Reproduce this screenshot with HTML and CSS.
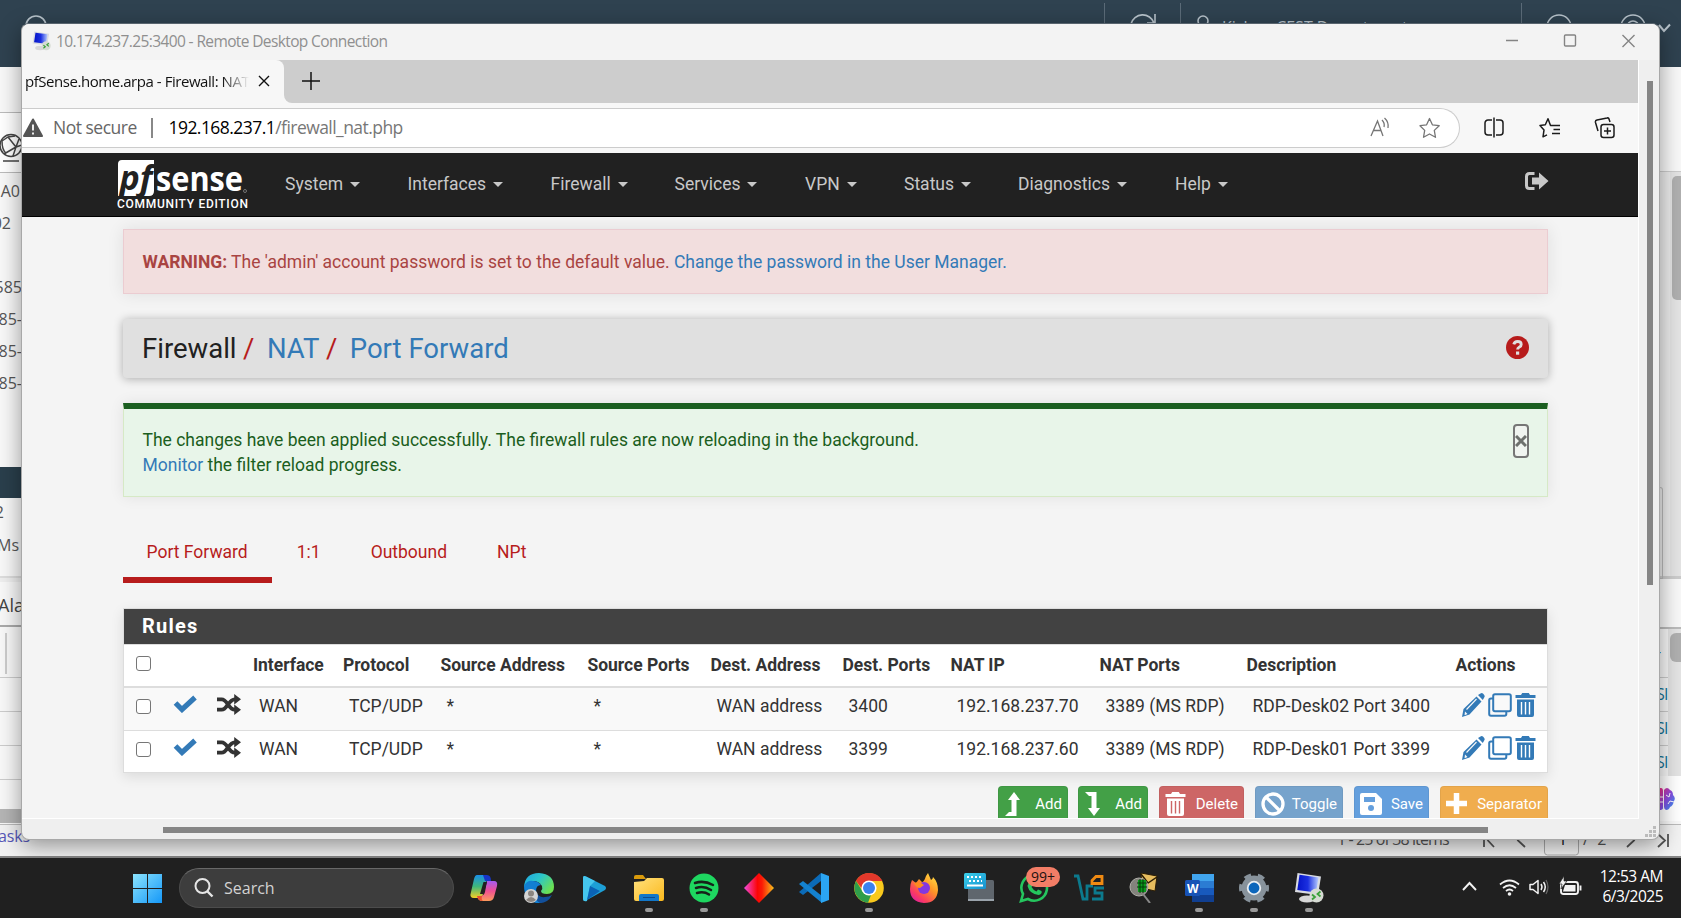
FILE: index.html
```html
<!DOCTYPE html>
<html lang="en">
<head>
<meta charset="utf-8">
<title>Remote Desktop</title>
<link rel="stylesheet" href="styles.css">
</head>
<body>
<svg class="defs" width="0" height="0">
  <defs>
    <symbol id="i-check" viewBox="0 0 24 18"><path d="M2.500 8 9 14.500 22 2.500" fill="none" stroke="#337ab7" stroke-width="5.200"/></symbol>
    <symbol id="i-shuffle" viewBox="0 0 23 20"><path d="M0 5h4.500C10 5 11 15 17 15h1M0 15h4.500C10 15 11 5 17 5h1" fill="none" stroke="#333" stroke-width="3.600"/><path d="M16.500 0 23 5l-6.500 5zM16.500 10 23 15l-6.500 5z" fill="#333"/></symbol>
    <symbol id="i-pencil" viewBox="0 0 23 24"><path d="M14.500 3.500 19.500 8.600 7.500 21.500 0 24l1.500-8zM16 2l2.500-1.600q1.500-.800 2.700.400l1 1.200q1 1.300 0 2.500L20.800 7z" fill="#337ab7"/><path d="M4.500 16.500 14.500 6" stroke="#f9f9f9" stroke-width="1.100"/><path d="M3 18.500l2.500 2.400-3 1.300z" fill="#f9f9f9"/></symbol>
    <symbol id="i-clone" viewBox="0 0 24 24"><path d="M7 1.200h14a1.800 1.800 0 0 1 1.800 1.800v13.500a1.800 1.800 0 0 1-1.800 1.800H7a1.800 1.800 0 0 1-1.800-1.800V3A1.800 1.800 0 0 1 7 1.200zM5 5.500H3A1.800 1.800 0 0 0 1.200 7.300V21A1.800 1.800 0 0 0 3 22.800h13.500a1.800 1.800 0 0 0 1.800-1.800v-2" fill="none" stroke="#337ab7" stroke-width="2"/></symbol>
    <symbol id="i-trash" viewBox="0 0 21 24"><path d="M.500 2H6l1.200-2h6.600L15 2h5.500v3H.500zM2 6.500h17v15.500a2 2 0 0 1-2 2H4a2 2 0 0 1-2-2z" fill="currentColor"/><path d="M6.500 9v12.500M10.500 9v12.500M14.500 9v12.500" class="bars" stroke-width="1.400"/></symbol>
    <linearGradient id="g-win" x1="0" y1="0" x2="1" y2="1"><stop offset="0" stop-color="#8be3fd"/><stop offset="1" stop-color="#1598f8"/></linearGradient>
    <linearGradient id="g-dia"><stop offset="0" stop-color="#f04be0"/><stop offset=".45" stop-color="#fb0505"/><stop offset=".6" stop-color="#fb1a05"/><stop offset="1" stop-color="#f7c11c"/></linearGradient>
    <linearGradient id="g-cop" x1="0" y1="0" x2="0" y2="1"><stop offset="0" stop-color="#1a8fe8"/><stop offset=".5" stop-color="#3fb77a"/><stop offset="1" stop-color="#f5cf25"/></linearGradient>
    <linearGradient id="g-cop2" x1="0" y1="0" x2="0" y2="1"><stop offset="0" stop-color="#a45bf0"/><stop offset=".5" stop-color="#ef5093"/><stop offset="1" stop-color="#fb9a5c"/></linearGradient>
    <linearGradient id="g-edge" x1="0" y1="0" x2="1" y2=".6"><stop offset="0" stop-color="#1fa5e6"/><stop offset=".5" stop-color="#2cc6c9"/><stop offset="1" stop-color="#6be052"/></linearGradient>
    <linearGradient id="g-fox" x1="1" y1="0" x2=".2" y2="1"><stop offset="0" stop-color="#fff04a"/><stop offset=".45" stop-color="#ff9526"/><stop offset=".8" stop-color="#fb3b62"/><stop offset="1" stop-color="#e01fa0"/></linearGradient>
    <linearGradient id="g-fold" x1="0" y1="0" x2="1" y2="1"><stop offset="0" stop-color="#ffe07c"/><stop offset="1" stop-color="#fbb91d"/></linearGradient>
    <linearGradient id="g-scr" x1="0" y1="0" x2="1" y2="0"><stop offset="0" stop-color="#0514c8"/><stop offset=".5" stop-color="#1b30e0"/><stop offset="1" stop-color="#b8ccff"/></linearGradient>
    <linearGradient id="g-kb" x1="0" y1="0" x2="1" y2="1"><stop offset="0" stop-color="#3bd0ea"/><stop offset="1" stop-color="#1590cf"/></linearGradient>
    <linearGradient id="g-brain" x1="0" y1="0" x2="1" y2="1"><stop offset="0" stop-color="#f02a7a"/><stop offset=".5" stop-color="#8a4be0"/><stop offset="1" stop-color="#2a9df5"/></linearGradient>
    <symbol id="i-rdp" viewBox="0 0 30 30"><ellipse cx="13" cy="26" rx="8" ry="3.500" fill="#d8d8d8"/><path d="M3.500 0 27 3.500 24 22 1 19z" fill="#d9dbe2"/><path d="M5.500 1.800 24.500 4.500 22 19.500 3.300 17z" fill="url(#g-scr)"/><circle cx="22.500" cy="22.500" r="7" fill="#d6dbd3"/><path d="M18 21.500l3 2.500-3 2.500M26.500 18.500l-3 2.500 3 2.500" fill="none" stroke="#3aa13a" stroke-width="1.800"/></symbol>
  </defs>
</svg>

<div class="desktop">
  <div class="app">
    <header class="app-header">
      <svg width="1681" height="67" fill="none" stroke="#b9c4cc" stroke-width="1.600">
        <circle cx="36" cy="26" r="10"/>
        <path d="M1104.500 3v25M1180.500 3v25M1521.500 3v25" stroke="#5b6b78" stroke-width="1"/>
        <path d="M1131 24a12 12 0 0 1 23 -1M1155 14v9h-8"/><circle cx="1203" cy="21" r="5"/>
        <circle cx="1559" cy="27" r="12"/><circle cx="1633" cy="27" r="12"/><circle cx="1633" cy="27" r="6"/>
        <path d="M1659 25l5 6 6-6.500" stroke-width="2"/>
      </svg>
      <span class="app-user">Kishan CEST Department</span>
    </header>
    <div class="app-body">
      <aside class="left">
        <div class="l-top"></div>
        <div class="l-globe"><svg width="22" height="34" viewBox="0 0 22 34" fill="none" stroke="#444" stroke-width="1.500"><circle cx="11" cy="12.500" r="11"/><path d="M2 8l6-4 8 10 6-2M8 4l7-1M4 21 16 14l-3 9M2 8q0 9 4 12M16 14l3-8M3 28h16"/></svg></div>
        <p class="l-row a">A0</p><p class="l-row b">02</p><p class="l-row c">585</p><p class="l-row d">85-</p><p class="l-row d">85-</p><p class="l-row d">85-</p>
        <div class="l-sel"></div>
        <p class="l-row e">2</p><p class="l-row f">Ms</p>
        <div class="l-div"></div>
        <p class="l-ala">Ala</p>
        <div class="l-head"><i></i></div>
        <div class="l-line"></div><div class="l-line"></div><div class="l-line"></div><div class="l-last"></div>
        <div class="l-scroll"></div>
      </aside>
      <aside class="right">
        <div class="r-top"></div>
        <div class="r-mid"><i class="r-box"></i><div class="r-track"><i></i></div></div>
        <div class="r-gap"></div>
        <div class="r-table"><div class="r-cells"><p class="r-h">-</p><p>SI</p><p>SI</p><p>SI</p></div><div class="r-track2"><i></i></div></div>
        <div class="r-brain"><svg width="20" height="24" viewBox="0 0 20 24"><path d="M0 1h2q2 0 2 3v17q0 2-4 2zM5 3q3-4 6 0 3 1 3 5 3 3 1 6-1 5-4 6-1 3-4 3-2-1-2-3z" fill="url(#g-brain)"/><path d="M0 10h4M0 15h4M7 8l3 2 1-4M9 17l2-3 4 1" fill="none" stroke="#fff"/></svg></div>
      </aside>
    </div>
    <footer class="pager">
      <a>asks</a>
      <span class="pg-count">1 - 25 of 38 items</span>
      <svg width="200" height="32" viewBox="1481 826 200 32" fill="none" stroke="#555" stroke-width="1.800"><path d="M1484 835v13M1494 835l-6 6.500 6 6.500M1525 835l-7 6.500 7 6.500M1627 835l7 6.500-7 6.500M1658 835l7 6.500-7 6.500M1668 835v13"/><rect x="1544.500" y="829" width="34" height="27" rx="3" stroke="#aaa" stroke-width="1"/><text x="1558" y="846" class="pg-t">1</text><text x="1583" y="846" class="pg-s">/ &#160;2</text></svg>
    </footer>
  </div>

  <section class="window">
    <div class="titlebar">
      <svg class="t-ico" width="19" height="20"><use href="#i-rdp"/></svg>
      <span class="t-text">10.174.237.25:3400 - Remote Desktop Connection</span>
      <svg class="t-ctl" width="132" height="14" viewBox="0 0 132 14" fill="none" stroke="#848484" stroke-width="1.400"><path d="M0 6.500h12M116.500 1l12 12M128.500 1l-12 12"/><rect x="58.500" y="1" width="11" height="11" rx="1"/></svg>
    </div>
    <div class="client">
      <div class="screen">
        <div class="tabs">
          <div class="tab"><span>pfSense.home.arpa - Firewall: NAT</span><svg width="12" height="12" viewBox="0 0 12 12" stroke="#111" stroke-width="1.400"><path d="M1 1l10 10M11 1 1 11"/></svg></div>
          <div class="tab-rest"><svg width="18" height="18" viewBox="0 0 18 18" stroke="#111" stroke-width="1.500"><path d="M9 0v18M0 9h18"/></svg></div>
        </div>
        <div class="addr">
          <div class="omni">
            <svg width="20" height="20" viewBox="0 0 20 20"><path d="M10 1.500 19 18H1z" fill="#555" stroke="#555" stroke-width="2" stroke-linejoin="round"/><path d="M10 6.500v6M10 14.500v2" stroke="#fff" stroke-width="1.800"/></svg>
            <span class="ns">Not secure</span><i></i><span class="url">192.168.237.1<b>/firewall_nat.php</b></span>
            <svg class="omni-r" width="70" height="22" viewBox="0 0 70 22" fill="none" stroke="#767676" stroke-width="1.300"><path d="M1 19 7.500 4 13 19M3.500 13.500h8M12 3q3 3 2 7M14.500 1q4.500 4 3.500 10"/><path d="M59.500 1.500l2.900 6.300 6.800.900-4.900 4.700 1.200 6.900-6-3.300-6 3.300 1.200-6.900L50 8.700l6.600-.900z" stroke-linejoin="round"/></svg>
          </div>
          <svg class="tools" width="134" height="22" viewBox="0 0 134 22" fill="none" stroke="#1b1b1b" stroke-width="1.500" stroke-linejoin="round"><path d="M8 3H4a3 3 0 0 0-3 3v9a3 3 0 0 0 3 3h4M12 3h4a3 3 0 0 1 3 3v9a3 3 0 0 1-3 3h-4M10 .500v20"/><path d="M71 8.500h-4.500L64 1.800l-2.700 6L56 8.600l4 4.500-1 6.700 4-2M69.500 8.500h6.500M69.500 12.500h6.500M68 16.500h8"/><rect x="117" y="7.500" width="13" height="13" rx="2.500"/><path d="M123.500 10.500v7M120 14h7M126 5l-1-3q-.500-1.500-2-1l-10 2q-2 .500-1.500 2.500l2.500 8.500"/></svg>
        </div>
        <nav class="nav">
          <div class="logo">
            <svg width="130" height="38" viewBox="0 0 130 38"><path d="M4 0H37v31q0 5-5 5H1V4q0-4 4-4z" fill="#fff"/><text x="2.500" y="29.500" class="pf" textLength="33" lengthAdjust="spacingAndGlyphs">pf</text><text x="39" y="30.500" class="sense" textLength="87" lengthAdjust="spacingAndGlyphs">sense</text><circle cx="128" cy="31" r="1.500" fill="none" stroke="#aaa" stroke-width=".6"/></svg>
            <span>COMMUNITY EDITION</span>
          </div>
          <ul class="menu"><li>System</li><li>Interfaces</li><li>Firewall</li><li>Services</li><li>VPN</li><li>Status</li><li>Diagnostics</li><li>Help</li></ul>
          <svg class="logout" width="24" height="18" viewBox="0 0 24 18"><path d="M9.500 1.500H4.500Q1.500 1.500 1.500 4.500v9q0 3 3 3h5" fill="none" stroke="#c8c8c8" stroke-width="3"/><path d="M7 5.500h7V.500L23.500 9 14 17.500v-5H7z" fill="#c8c8c8"/></svg>
        </nav>
        <main class="page">
          <div class="warn"><b>WARNING:</b> The 'admin' account password is set to the default value. <a>Change the password in the User Manager.</a></div>
          <div class="crumb"><span>Firewall<i>/</i></span><a>NAT</a><i>/</i><a class="last">Port Forward</a>
            <svg width="23" height="23" viewBox="0 0 23 23"><circle cx="11.500" cy="11.500" r="11.500" fill="#b71c1c"/><path d="M7.800 8.300Q8.500 5.500 11.600 5.500q3.600 0 3.600 2.900 0 1.700-1.800 2.600-1.800.900-1.800 2.600" fill="none" stroke="#e0e0e0" stroke-width="2.900"/><rect x="10" y="15.500" width="3.200" height="3.200" fill="#e0e0e0"/></svg></div>
          <div class="ok"><div>The changes have been applied successfully. The firewall rules are now reloading in the background.<br><a>Monitor</a> the filter reload progress.</div>
            <button><svg width="12" height="12" viewBox="0 0 12 12" stroke="#6d706d" stroke-width="3"><path d="M1 1l10 10M11 1 1 11"/></svg></button></div>
          <div class="ptabs"><a class="on">Port Forward</a><a>1:1</a><a>Outbound</a><a>NPt</a></div>
          <div class="panel">
            <h2>Rules</h2>
            <div class="row head"><span><i class="cb"></i></span><span></span><span></span><span>Interface</span><span>Protocol</span><span>Source Address</span><span>Source Ports</span><span>Dest. Address</span><span>Dest. Ports</span><span>NAT IP</span><span>NAT Ports</span><span>Description</span><span>Actions</span></div>
            <div class="row odd"><span><i class="cb"></i></span><span><svg width="24" height="18"><use href="#i-check"/></svg></span><span><svg width="24" height="21"><use href="#i-shuffle"/></svg></span><span>WAN</span><span>TCP/UDP</span><span>*</span><span>*</span><span>WAN address</span><span>3400</span><span>192.168.237.70</span><span>3389 (MS RDP)</span><span>RDP-Desk02 Port 3400</span><span class="acts"><svg width="23" height="24"><use href="#i-pencil"/></svg><svg width="24" height="24"><use href="#i-clone"/></svg><svg width="21" height="24"><use href="#i-trash"/></svg></span></div>
            <div class="row"><span><i class="cb"></i></span><span><svg width="24" height="18"><use href="#i-check"/></svg></span><span><svg width="24" height="21"><use href="#i-shuffle"/></svg></span><span>WAN</span><span>TCP/UDP</span><span>*</span><span>*</span><span>WAN address</span><span>3399</span><span>192.168.237.60</span><span>3389 (MS RDP)</span><span>RDP-Desk01 Port 3399</span><span class="acts"><svg width="23" height="24"><use href="#i-pencil"/></svg><svg width="24" height="24"><use href="#i-clone"/></svg><svg width="21" height="24"><use href="#i-trash"/></svg></span></div>
          </div>
          <div class="btns">
            <div class="btn add"><svg width="16" height="24" viewBox="0 0 16 24"><path d="M10 0l6 8h-3.500v16H1l4-4h2.500V8H4z" fill="#fff"/></svg>Add</div>
            <div class="btn add"><svg width="16" height="24" viewBox="0 0 16 24"><path d="M10 24l6-8h-3.500V0H1l4 4h2.500v12H4z" fill="#fff"/></svg>Add</div>
            <div class="btn del"><svg width="21" height="24"><use href="#i-trash"/></svg>Delete</div>
            <div class="btn tog"><svg width="24" height="24" viewBox="0 0 24 24" fill="none" stroke="#fff" stroke-width="3.300"><circle cx="12" cy="12" r="10"/><path d="M5 5l14 14"/></svg>Toggle</div>
            <div class="btn save"><svg width="22" height="22" viewBox="0 0 22 22"><path d="M2 0h14l6 6v14a2 2 0 0 1-2 2H2a2 2 0 0 1-2-2V2a2 2 0 0 1 2-2z" fill="#fff"/><path d="M4 4h11v5H4z" fill="#649fdd"/><circle cx="11" cy="15" r="3" fill="#649fdd"/></svg>Save</div>
            <div class="btn sep"><svg width="21" height="21" viewBox="0 0 21 21" stroke="#fff" stroke-width="5.500"><path d="M10.500 0v21M0 10.500h21"/></svg>Separator</div>
          </div>
        </main>
      </div>
      <div class="vbar"><i></i></div>
    </div>
    <div class="hbar"><i></i><svg width="11" height="11" fill="#bbb"><path d="M8 0h3v3H8zM4 4h3v3H4zM8 4h3v3H8zM0 8h3v3H0zM4 8h3v3H4zM8 8h3v3H8z"/></svg></div>
  </section>

  <footer class="taskbar">
    <svg class="start" width="29" height="29" viewBox="0 0 29 29"><path d="M0 0h14v14H0zM15 0h14v14H15zM0 15h14v14H0zM15 15h14v14H15z" fill="url(#g-win)"/></svg>
    <div class="search"><svg width="20" height="20" viewBox="0 0 20 20" fill="none" stroke="#e6e6e6" stroke-width="2"><circle cx="8.500" cy="8" r="7"/><path d="M13 13l5.500 5.500" stroke-width="2.400"/></svg><span>Search</span></div>
    <div class="apps">
      <div><svg viewBox="0 0 30 30"><path d="M8 2h8q3 0 2 4l-4 15q-1 4-4 4H5q-5 0-3-6L5 6q1-4 3-4z" fill="url(#g-cop)"/><path d="M14 2h4q4 0 4 6h-6z" fill="#1735c9"/><path d="M18 8h7q4 0 3 5l-3 11q-1 4-5 4h-7q-4 0-5-5h3q4 0 5-4z" fill="url(#g-cop2)"/><path d="M8 23h5q-1 4 1 5-5 0-6-5z" fill="#e8502f"/><path d="M14.500 9h3.500l-3.500 12H11z" fill="#202020"/></svg></div>
      <div><svg viewBox="0 0 30 30"><path d="M0 14Q1 0 15 0q15 1 15 14 0 7-7 7-6 0-6-3 2-2 1-5-3-5-9-5Q3 8 0 14z" fill="url(#g-edge)"/><path d="M0 13q3-6 9-5 5 0 8 4-5 0-5 6 1 8 10 9-5 4-10 3Q0 27 0 13z" fill="#127fd2"/><path d="M12 18q2 7 9 6 4 0 7-2-4 8-12 8-6-3-4-12z" fill="#12509c"/><circle cx="7" cy="23" r="7" fill="#d5d5d5"/><circle cx="7" cy="20.500" r="3" fill="#8b8580"/><path d="M2 27q5-6 10 0-5 4-10 0z" fill="#8b8580"/></svg></div>
      <div><svg viewBox="0 0 30 30"><path d="M4 5q0-3 3-1.500L26 13q2 2 0 4L7 27.500q-3 1-3-2z" fill="#1d9fd6"/><path d="M4 5q0-3 3-1.500L16 8l-5 5-3 15q-4 1-4-2z" fill="#45c6ee"/><path d="M11 13l10 5-13 9z" fill="#0a62b5"/></svg></div>
      <div class="run"><svg viewBox="0 0 30 30"><path d="M0 4q0-2 2-2h7l3 4h-12z" fill="#d99a0b"/><path d="M0 9l10-1 3-3h15q2 0 2 2v19q0 2-2 2H2q-2 0-2-2z" fill="url(#g-fold)"/><path d="M5 28v-5q0-2 2-2h16q2 0 2 2v5z" fill="#1277c9"/><path d="M9 24.500h12" stroke="#0b4b8d"/></svg></div>
      <div class="run"><svg viewBox="0 0 30 30"><circle cx="15" cy="15" r="14.500" fill="#1ed760"/><path d="M6 10q9-3 18 2M7 15q8-2.500 15 2M8 20q7-2 12 1.500" fill="none" stroke="#17221a" stroke-width="2.500" stroke-linecap="round"/></svg></div>
      <div><svg viewBox="0 0 30 30"><path d="M15 0l15 15-15 15L0 15z" fill="url(#g-dia)"/></svg></div>
      <div><svg viewBox="0 0 30 30"><path d="M22 0v8L4 22 0 19z" fill="#0b6bb8"/><path d="M0 11l4-3 19 15v7z" fill="#1482cf"/><path d="M22 0l8 3v24l-8 3z" fill="#2ba5f2"/></svg></div>
      <div class="run"><svg viewBox="0 0 30 30"><circle cx="15" cy="15" r="14.800" fill="#f9c91d"/><path d="M2 8A15 15 0 0 1 28.500 8H15z" fill="#e2382b"/><path d="M2 8q4-7 13-8v8l-6 9z" fill="#e2382b"/><path d="M2 8l7 11 8 3-3 7.800A15 15 0 0 1 2 8z" fill="#2f9e4b"/><circle cx="15" cy="15" r="7.600" fill="#fff"/><circle cx="15" cy="15" r="6" fill="#3b82ee"/></svg></div>
      <div><svg viewBox="0 0 30 30"><path d="M3 7l4 3 3-4 3 3q2 0 4-6l2-3 3 7q2-1 2-3 5 5 5 13-1 13-14 13Q1 29 1 16q0-5 2-9z" fill="url(#g-fox)"/><circle cx="15" cy="15" r="6" fill="#8337e0"/><path d="M5 10q6-2 10 2l-4 3q-4 0-6-5z" fill="#ff8a1e"/></svg></div>
      <div><svg viewBox="0 0 30 30"><rect x="4" y="7" width="26" height="21" rx="1.500" fill="#5f666d"/><path d="M4 26h26v2H4z" fill="#9aa3ab"/><rect width="22" height="16" rx="1.500" fill="url(#g-kb)"/><path d="M3 4h16M5 8h13" stroke="#fff" stroke-width="2" stroke-dasharray="2 2"/><path d="M3 12.500h16" stroke="#fff" stroke-width="2"/></svg></div>
      <div><svg viewBox="0 0 30 30"><path d="M2 28l2-7A12.800 12.800 0 1 1 9 26z" fill="none" stroke="#25c55e" stroke-width="2.600"/><path d="M10 9q2-2 3 0l1 3-1.500 2q2 3.500 5 4.500l1.500-2 3.500 1.500q1 3-3 4-9-1-11-9z" fill="#25c55e"/></svg><em>99+</em></div>
      <div><svg viewBox="0 0 30 30" fill="none" stroke-width="2.800"><path d="M0 3h4l5 23h4V13h6M30 15h-9v5h7v6H18" stroke="#0c7a8d"/><path d="M18 10.500v-3l4-4h6v7z" stroke="#f08a12"/></svg></div>
      <div><svg viewBox="0 0 30 30"><path d="M12 0l16 3-2 15-13-3z" fill="#e7bd5e" stroke="#2a1c05"/><path d="M12 1l7 9 9-6" fill="none" stroke="#2a1c05" stroke-width="1.500"/><circle cx="10" cy="14" r="9" fill="#83837c" stroke="#b0b0aa"/><path d="M9 7h8v12H9z" fill="#0a9c1c"/><path d="M11 6v14M14 6v14M8 10h10M8 14h10" stroke="#053a08"/><path d="M14 21l7 9" stroke="#888" stroke-width="2"/></svg></div>
      <div class="run"><svg viewBox="0 0 30 30"><path d="M8 1h22v8H8z" fill="#41a5ee"/><path d="M8 8h22v7H8z" fill="#2b7cd3"/><path d="M8 15h22v7H8z" fill="#185abd"/><path d="M8 22h22v7H8z" fill="#103f91"/><rect x="1" y="7" width="15" height="16" rx="1.500" fill="#1853b6"/><text x="3" y="19.500" class="w">W</text></svg></div>
      <div class="run"><svg viewBox="0 0 30 30"><circle cx="15" cy="15" r="12.500" fill="none" stroke="#87929b" stroke-width="5" stroke-dasharray="6.540 6.550" stroke-dashoffset="3.270"/><circle cx="15" cy="15" r="9" fill="none" stroke="#87929b" stroke-width="7"/><circle cx="15" cy="15" r="6.300" fill="#0c66bb" stroke="#e9eef2" stroke-width="1.800"/></svg></div>
      <div class="run"><svg viewBox="0 0 30 30"><use href="#i-rdp"/></svg></div>
    </div>
    <svg class="tray" width="120" height="24" viewBox="0 0 120 24" fill="none" stroke="#f2f2f2" stroke-width="1.900"><path d="M1 15l6.500-7 6.500 7"/><path d="M38 9.500q9.500-8 19 0M41 13q6.500-5.500 13 0M44 16q3.500-3 7 0" stroke-width="1.700"/><circle cx="47.500" cy="19" r="1.800" fill="#f2f2f2" stroke="none"/><path d="M68 9.500h3l5-4v13l-5-4h-3z" stroke-width="1.500" stroke-linejoin="round"/><path d="M79 9q2 3 0 6M81.500 7q3.500 5 0 10" stroke-width="1.500"/><path d="M84 5q4 7 0 14" stroke="#666" stroke-width="1.200"/><rect x="99" y="7" width="17" height="12" rx="2.500"/><path d="M103 10h10.500v6.500H101z" fill="#f2f2f2" stroke="none"/><path d="M118.500 10.500v5" /><path d="M102 1l-5 8h3l-1 5 6-8h-3z" fill="#f2f2f2" stroke="#202020" stroke-width=".7"/></svg>
    <div class="clock"><span>12:53 AM</span><span>6/3/2025</span></div>
  </footer>
</div>
</body>
</html>
```
FILE: styles.css
```css
* { box-sizing: border-box; }
html, body { height: 918px; }
body { margin: 0; overflow: hidden; font-family: Roboto, sans-serif; font-size: 17.5px; color: #333; }
p, h2, ul { margin: 0; padding: 0; }
svg { display: block; flex: none; }
.defs { position: absolute; }
.desktop { position: relative; width: 1681px; height: 918px; overflow: hidden; display: flex; flex-direction: column; background: #202020; }

/* application behind the remote window */
.app { height: 858px; display: flex; flex-direction: column; background: #f8f8f8; border-bottom: 2px solid #858585; font-family: "Open Sans", sans-serif; color: #565656; }
.app-header { height: 67px; background: #2f4250; position: relative; flex: none; overflow: hidden; }
.app-user { position: absolute; left: 1222px; top: 16px; font-size: 16px; color: #b9c4cc; }
.app-body { height: 759px; display: flex; justify-content: space-between; }
.left { width: 22px; overflow: hidden; display: flex; flex-direction: column; }
.l-top { height: 46px; border-bottom: 1px solid #bbb; flex: none; }
.l-globe { height: 60px; border-bottom: 1px solid #bbb; padding-top: 20px; flex: none; background: #fff; }
.l-row { height: 32px; line-height: 32px; font-size: 16px; white-space: nowrap; flex: none; display: flex; justify-content: flex-end; }
.l-row.a { height: 34px; line-height: 36px; padding-right: 2px; }
.l-row.b { padding-right: 11px; height: 38px; }
.l-row.c { height: 60px; line-height: 84px; }
.l-row.d { height: 32px; line-height: 29px; }
.l-sel { height: 31px; background: #2a3f4c; margin-top: 66px; flex: none; }
.l-row.e { line-height: 29px; padding-right: 18px; }
.l-row.f { line-height: 31px; padding-right: 3px; height: 46px; }
.l-div { height: 6px; border-top: 2px solid #ddd; background: #eee; flex: none; }
.l-ala { height: 45px; line-height: 46px; font-size: 18px; border-bottom: 2px solid #aaa; flex: none; margin-left: -2px; color: #444; }
.l-head { height: 51px; border-bottom: 1px solid #ccc; padding: 6px 0 0 5px; flex: none; }
.l-head i { display: block; width: 2px; height: 41px; background: #ccc; }
.l-line { height: 34px; border-bottom: 1px solid #ccc; flex: none; }
.l-last { height: 29px; flex: none; }
.l-scroll { height: 14px; background: #b5b5b5; flex: none; }
.right { width: 22px; display: flex; flex-direction: column; }
.r-top { height: 105px; border-bottom: 1px solid #ccc; flex: none; }
.r-mid { height: 407px; background: #ebebeb; display: flex; justify-content: space-between; flex: none; border-bottom: 3px solid #ccc; }
.r-box { width: 4px; height: 92px; border: 1px solid #bbb; border-left: 0; border-radius: 0 3px 0 0; margin-top: 315px; }
.r-track { width: 11px; background: #e4e4e4; padding: 4px 0 0 2px; }
.r-track i { display: block; width: 12px; height: 124px; border-radius: 5px 0 0 5px; background: #b0b0b0; }
.r-gap { height: 50px; border-bottom: 2px solid #bbb; flex: none; }
.r-table { height: 147px; display: flex; flex: none; }
.r-cells { width: 9px; overflow: hidden; color: #12749a; font-size: 16px; }
.r-cells p { height: 34px; line-height: 32px; border-bottom: 1px solid #ccc; margin-left: -3px; white-space: nowrap; letter-spacing: -.7px; }
.r-cells p.r-h { height: 49px; line-height: 44px; }
.r-track2 { width: 13px; background: #e4e4e4; padding: 4px 0 0 2px; }
.r-track2 i { display: block; width: 12px; height: 29px; border-radius: 6px 0 0 6px; background: #b0b0b0; }
.r-brain { height: 45px; background: #fff; padding-top: 11px; }
.pager { height: 32px; display: flex; align-items: flex-start; border-top: 1px solid #bbb; background: #f2f2f2; font-size: 16px; line-height: 22px; }
.pager a { color: #5657b8; width: 1339px; letter-spacing: -.1px; margin-left: -2px; }
.pg-count { width: 144px; letter-spacing: -.9px; line-height: 28px; white-space: nowrap; }
.pg-t { fill: #112; stroke: none; font-size: 16px; }
.pg-s { fill: #555; stroke: none; font-size: 16px; }

/* remote desktop window */
.window { position: absolute; left: 21px; top: 23px; width: 1639px; height: 817px; border: 1px solid #a8a8a8; border-top-color: #58646e; border-radius: 8px; overflow: hidden; background: #efefef; box-shadow: 0 6px 22px rgba(0,0,0,.4); display: flex; flex-direction: column; }
.titlebar { height: 36px; flex: none; background: #f3f3f3; display: flex; align-items: center; padding: 0 0 2px 10px; font: 15.500px "Open Sans", sans-serif; color: #8f8f8f; }
.t-text { margin-left: 5px; letter-spacing: -.62px; width: 1000px; white-space: nowrap; }
.t-ctl { margin-left: auto; margin-right: 21px; }
.client { height: 759px; flex: none; display: flex; }
.screen { width: 1617px; height: 760px; height: 759px; overflow: hidden; background: #f4f4f4; border-right: 1px solid #fff; border-bottom: 1px solid #fff; flex: none; }
.vbar { width: 21px; padding: 21px 0 0 8px; }
.vbar i { display: block; width: 6px; height: 504px; background: #858585; }
.hbar { flex: 1; display: flex; padding: 8px 3px 0 141px; justify-content: space-between; }
.hbar i { width: 1325px; height: 6px; background: #858585; }
.hbar svg { margin-top: -1px; }
.tabs { height: 43px; display: flex; background: linear-gradient(#cdcdcd 50%, #f7f7f7 50%); }
.tab { width: 262px; display: flex; align-items: center; padding: 0 0 2px 3px; font: 15px "Open Sans", sans-serif; color: #111; background: #f7f7f7; border-top-right-radius: 8px; }
.tab span { width: 224px; overflow: hidden; white-space: nowrap; letter-spacing: -.45px; -webkit-mask: linear-gradient(90deg, #000 88%, transparent); mask: linear-gradient(90deg, #000 88%, transparent); }
.tab svg { margin-left: 9px; }
.tab-rest { flex: 1; background: #cdcdcd; border-bottom-left-radius: 8px; padding: 12px 0 0 18px; }
.addr { height: 50px; background: #f7f7f7; display: flex; align-items: center; }
.omni { width: 1438px; height: 40px; background: #fff; border: 1px solid #ccc; border-left: 0; border-radius: 0 20px 20px 0; display: flex; align-items: center; font: 17.500px "Open Sans", sans-serif; }
.omni i { width: 1.500px; height: 20px; background: #888; margin: 0 16px 0 14px; }
.omni svg:first-child { margin-left: 1px; }
.ns { color: #666; margin: -2px 0 0 10px; width: 84px; white-space: nowrap; letter-spacing: -.5px; }
.url { color: #000; letter-spacing: -.55px; margin-top: -2px; }
.url b { font-weight: 400; color: #777; }
.omni-r { margin-left: auto; margin-right: 19px; }
.tools { margin-left: 24px; }
.nav { height: 64px; background: #212121; border-bottom: 1px solid #000; display: flex; position: relative; }
.logo { width: 263px; padding: 7px 0 0 95px; flex: none; color: #fff; }
.logo span { display: block; font-size: 12px; line-height: 13px; letter-spacing: .7px; margin-top: 0; font-weight: 500; white-space: nowrap; }
.pf { font: italic 700 34px "Open Sans", sans-serif; fill: #212121; }
.sense { font: 700 34px "Open Sans", sans-serif; fill: #fff; }
.menu { display: grid; grid-template-columns: 122.500px 143px 124px 130.500px 99px 114px 157px 90px; list-style: none; color: #c8c8c8; line-height: 62px; }
.menu li::after { content: ""; display: inline-block; border: 5px solid transparent; border-top-color: #c8c8c8; border-bottom: 0; margin-left: 7px; vertical-align: 3px; }
.logout { margin: 19px 89px 0 auto; }
.page { padding: 12px 90px 0 101px; line-height: 25px; }
a { color: #337ab7; }
.warn { height: 65px; background: #f2dede; border: 1px solid #ebccd1; color: #a94442; padding: 20px 18.500px; box-shadow: 0 0 16px rgba(0,0,0,.09); }
.crumb { height: 59px; margin-top: 25px; background: #e0e0e0; border-radius: 4px; box-shadow: 0 1px 10px rgba(0,0,0,.3); display: flex; align-items: center; padding: 0 19px 0; font-size: 27.500px; color: #212121; }
.crumb i { font-style: normal; color: #b71c1c; margin: 0 12.500px 0 6.500px; }
.crumb svg { margin: -2px 0 0 auto; }
.ok { height: 94px; margin-top: 25px; background: #e8f5e9; border: 1px solid #d6e9c6; border-top: 6px solid #1b5e20; color: #1b5e20; padding: 19px 18px 0 18.500px; display: flex; justify-content: space-between; box-shadow: 0 0 14px rgba(0,0,0,.08); }
.ok button { width: 16px; height: 34px; margin-top: -4px; padding: 0; border: 2px solid #767676; border-radius: 4px; background: #f0f4f0; display: flex; align-items: center; justify-content: center; }
.ptabs { margin-top: 33px; height: 53px; display: flex; }
.ptabs a { color: #b71c1c; padding: 10px 25px 0; border-bottom: 6px solid transparent; }
.ptabs a.on { border-color: #b71c1c; padding: 10px 24px 0 23.500px; }
.panel { margin-top: 25px; height: 165px; border: 1px solid #ddd; background: #fff; box-shadow: 0 4px 12px rgba(0,0,0,.1); }
.panel h2 { height: 36px; background: #424242; border-bottom: 1px solid #ddd; color: #fff; font-size: 20px; font-weight: 700; line-height: 35px; letter-spacing: 1.250px; padding-left: 18px; }
.row { display: grid; grid-template-columns: 37px 43px 49px 90px 97.500px 147px 123px 132px 108px 149px 147px 209px 1fr; height: 43px; align-items: center; border-top: 1px solid #ddd; white-space: nowrap; padding-bottom: 5px; }
.row.odd { background: #f9f9f9; }
.head { height: 42px; border-top: 0; border-bottom: 1px solid #ddd; font-weight: 700; padding: 0; letter-spacing: -.03px; }
.row:not(.head) span:nth-child(n+4) { padding-left: 6px; }
.row span:first-child { padding-left: 12px; }
.row span:nth-child(2) { padding-left: 12px; }
.row span:nth-child(3) { padding-left: 12.500px; }
.row span:nth-child(2) svg, .row span:nth-child(3) svg { margin-top: -5px; }
.cb { display: block; width: 15px; height: 15px; border: 1.500px solid #767676; border-radius: 3px; background: #fff; }
.head .cb { margin-top: -5px; }
.acts { display: flex; gap: 3px; color: #337ab7; margin-top: -4px; }
.bars { stroke: var(--bar, #fff); }
.btns { display: flex; justify-content: flex-end; margin-top: 13px; }
.btn { height: 42px; border-radius: 4px; border: 1px solid rgba(0,0,0,.05); color: #fff; font-size: 15px; display: flex; align-items: flex-start; justify-content: space-between; padding: 5px 5px 0; line-height: 25px; margin-left: 10px; }
.add { background: #43a047; width: 70px; }
.del { background: #cd6666; width: 85px; margin-left: 11px; --bar: #cd6666; }
.tog { background: #76a3cc; width: 88px; margin-left: 11px; }
.save { background: #649fdd; width: 75px; margin-left: 11px; }
.sep { background: #f0ad4e; width: 108px; margin-left: 11px; }
.save svg, .sep svg { margin-top: 1px; }

/* taskbar */
.taskbar { height: 60px; background: #202020; display: flex; position: relative; font-family: "Open Sans", sans-serif; }
.start { margin: 16px 0 0 133px; }
.search { width: 275px; height: 40px; margin: 10px 0 0 17px; border-radius: 20px; background: #3d3d3d; border: 1px solid #4c4c4c; border-top-color: #686868; display: flex; align-items: center; padding-left: 14px; color: #d2d2d2; font-size: 16px; }
.search span { margin-left: 10px; letter-spacing: 0; }
.apps { display: flex; margin-left: 2px; }
.apps div { width: 55px; display: flex; flex-direction: column; align-items: center; padding-top: 15px; position: relative; }
.apps svg { width: 30px; height: 30px; }
.apps .run::after { content: ""; width: 8px; height: 4px; border-radius: 2px; background: #9a9a9a; margin-top: 5px; }
.apps em { position: absolute; left: 20px; top: 9px; width: 34px; height: 20px; border-radius: 10px; background: #f27d66; color: #1d1210; font: 14px/20px "Open Sans", sans-serif; text-align: center; }
.w { font: 700 12px "Open Sans", sans-serif; fill: #fff; }
.tray { margin: 17px 0 0 126px; }
.clock { display: flex; flex-direction: column; align-items: flex-end; margin: 8px 18px 0 auto; color: #fff; font-size: 15.500px; line-height: 20px; letter-spacing: -.5px; }
```
